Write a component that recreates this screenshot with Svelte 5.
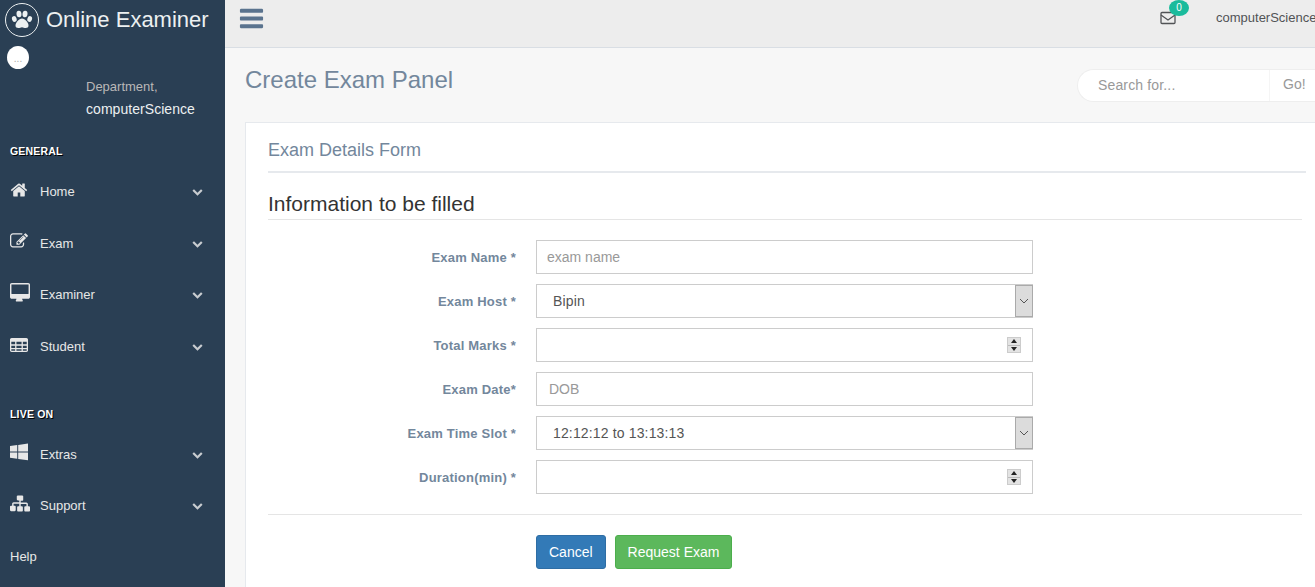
<script>
  const generalMenu = [
    { label: 'Home', icon: 'home' },
    { label: 'Exam', icon: 'edit' },
    { label: 'Examiner', icon: 'desktop' },
    { label: 'Student', icon: 'table' }
  ];
  const liveMenu = [
    { label: 'Extras', icon: 'windows' },
    { label: 'Support', icon: 'sitemap' }
  ];
</script>

{#snippet navIcon(name)}
  <svg class="nav-icon {name}" viewBox="0 0 1792 1792" fill="currentColor" aria-hidden="true">
    {#if name === 'home'}
      <path d="M1472 992v480q0 26-19 45t-45 19h-384v-384H768v384H384q-26 0-45-19t-19-45V992q0-1 .5-3t.5-3l575-474 575 474q1 2 1 6zm223-69l-62 74q-8 9-21 11h-3q-13 0-21-7L896 424l-692 577q-12 8-24 7-13-2-21-11l-62-74q-8-10-7-23.5t11-21.5l719-599q32-26 76-26t76 26l244 204V288q0-14 9-23t23-9h192q14 0 23 9t9 23v408l219 182q10 8 11 21.5t-7 23.5z" />
    {:else if name === 'edit'}
      <path d="M888 1184l116-116-152-152-116 116v56h96v96h56zm440-720q-16-16-33 1L945 815q-17 17-1 33t33-1l350-350q17-17 1-33zm80 594v190q0 119-84.500 203.500T1120 1536H288q-119 0-203.500-84.500T0 1248V416q0-119 84.500-203.500T288 128h832q63 0 117 25 15 7 18 23 3 17-9 29l-49 49q-14 14-32 8-23-6-45-6H288q-66 0-113 47t-47 113v832q0 66 47 113t113 47h832q66 0 113-47t47-113v-126q0-13 9-22l64-64q15-15 35-7t20 29zm-96-738l288 288-672 672H640v-288zm444 132l-92 92-288-288 92-92q28-28 68-28t68 28l152 152q28 28 28 68t-28 68z" />
    {:else if name === 'desktop'}
      <path d="M1664 944V160q0-13-9.500-22.500T1632 128H160q-13 0-22.500 9.500T128 160v784q0 13 9.500 22.500T160 976h1472q13 0 22.500-9.500t9.500-22.500zm128-784v1088q0 66-47 113t-113 47h-544q0 37 16 77.500t32 71 16 43.500q0 26-19 45t-45 19H576q-26 0-45-19t-19-45q0-14 16-44t32-70 16-78H160q-66 0-113-47T0 1248V160Q0 94 47 47T160 0h1472q66 0 113 47t47 113z" />
    {:else if name === 'table'}
      <path fill-rule="evenodd" d="M160 192h1472q66 0 113 47t47 113v1088q0 66-47 113t-113 47H160q-66 0-113-47T0 1440V352q0-66 47-113t113-47zM128 576v256h384V576zm512 0v256h512V576zm640 0v256h384V576zM128 960v224h384V960zm512 0v224h512V960zm640 0v224h384V960zM128 1312v128q0 32 32 32h352v-160zm512 0v160h512v-160zm640 0v160h352q32 0 32-32v-128z" />
    {:else if name === 'windows'}
      <path d="M0 300l720-98v640H0zM816 190l976-134v786H816zM0 938h720v640L0 1480zM816 938h976v786l-976-134z" />
    {:else if name === 'sitemap'}
      <path d="M704 128h384q40 0 68 28t28 68v288q0 40-28 68t-68 28H960v160h512q52 0 90 38t38 90v192h96q40 0 68 28t28 68v288q0 40-28 68t-68 28h-320q-40 0-68-28t-28-68v-288q0-40 28-68t68-28h96v-192H960v192h96q40 0 68 28t28 68v288q0 40-28 68t-68 28H736q-40 0-68-28t-28-68v-288q0-40 28-68t68-28h96V864H320v192h96q40 0 68 28t28 68v288q0 40-28 68t-68 28H96q-40 0-68-28t-28-68v-288q0-40 28-68t68-28h96V864q0-52 38-90t90-38h512V576H704q-40 0-68-28t-28-68V224q0-40 28-68t68-28z" />
    {/if}
  </svg>
{/snippet}

{#snippet menuItem(item)}
  <li class="menu-item">
    {@render navIcon(item.icon)}
    <span class="menu-label">{item.label}</span>
    <svg class="chevron" viewBox="0 0 1792 1792" fill="currentColor" aria-hidden="true">
      <path d="M1683 808l-742 741q-19 19-45 19t-45-19L109 808q-19-19-19-45.500t19-45.500l166-165q19-19 45-19t45 19l531 531 531-531q19-19 45-19t45 19l166 165q19 19 19 45.500t-19 45.500z" />
    </svg>
  </li>
{/snippet}

<div class="layout">
  <aside class="sidebar">
    <div class="brand">
      <span class="brand-logo">
        <svg viewBox="0 0 24 24" width="24" height="24" fill="currentColor" aria-hidden="true">
          <ellipse cx="4.300" cy="11" rx="2.300" ry="3" transform="rotate(-18 4.300 11)" />
          <ellipse cx="9" cy="6" rx="2.500" ry="3.300" transform="rotate(-6 9 6)" />
          <ellipse cx="15" cy="6" rx="2.500" ry="3.300" transform="rotate(6 15 6)" />
          <ellipse cx="19.700" cy="11" rx="2.300" ry="3" transform="rotate(18 19.700 11)" />
          <path d="M12 10.500c-3 0-6.500 4-6.500 7 0 1.800 1.300 2.500 2.800 2.500 1.500 0 2.500-.8 3.700-.8s2.200.8 3.700.8c1.500 0 2.800-.7 2.800-2.500 0-3-3.500-7-6.500-7z" />
        </svg>
      </span>
      <span class="brand-name">Online Examiner</span>
    </div>

    <div class="avatar">...</div>
    <div class="profile">
      <span class="welcome">Department,</span>
      <span class="dept">computerScience</span>
    </div>

    <h3 class="section first">GENERAL</h3>
    <ul class="menu">
      {#each generalMenu as item}
        {@render menuItem(item)}
      {/each}
    </ul>

    <h3 class="section live">LIVE ON</h3>
    <ul class="menu">
      {#each liveMenu as item}
        {@render menuItem(item)}
      {/each}
    </ul>
    <div class="help">Help</div>
  </aside>

  <main class="main">
    <header class="topbar">
      <svg class="toggle" viewBox="0 0 1792 1792" fill="currentColor" aria-hidden="true">
        <path d="M1664 1344v128q0 26-19 45t-45 19H192q-26 0-45-19t-19-45v-128q0-26 19-45t45-19h1408q26 0 45 19t19 45zm0-512v128q0 26-19 45t-45 19H192q-26 0-45-19t-19-45V832q0-26 19-45t45-19h1408q26 0 45 19t19 45zm0-512v128q0 26-19 45t-45 19H192q-26 0-45-19t-19-45V320q0-26 19-45t45-19h1408q26 0 45 19t19 45z" />
      </svg>
      <div class="mail">
        <svg viewBox="0 0 16 14" width="16" height="14" fill="none" stroke="currentColor" stroke-width="1.300" aria-hidden="true">
          <rect x="1" y="1.500" width="14" height="11" rx="1" />
          <path d="M1 4l7 5 7-5" />
        </svg>
        <span class="badge">0</span>
      </div>
      <span class="user">computerScience</span>
    </header>

    <section class="content">
      <div class="page-title">
        <h1>Create Exam Panel</h1>
        <div class="search">
          <input type="text" placeholder="Search for..." />
          <span class="go">Go!</span>
        </div>
      </div>

      <div class="panel">
        <h2 class="panel-title">Exam Details Form</h2>
        <form class="form">
          <h3 class="legend">Information to be filled</h3>

          <div class="row">
            <label for="exam-name">Exam Name *</label>
            <input id="exam-name" class="field tight" type="text" placeholder="exam name" />
          </div>
          <div class="row">
            <label for="exam-host">Exam Host *</label>
            <div class="select">
              <select id="exam-host" class="field"><option>Bipin</option></select>
              <span class="select-btn"><svg viewBox="0 0 10 6" width="10" height="6" fill="none" stroke="#555" stroke-width="1"><path d="M1 1l4 4 4-4" /></svg></span>
            </div>
          </div>
          <div class="row">
            <label for="total-marks">Total Marks *</label>
            <div class="select">
              <input id="total-marks" class="field" type="text" />
              <span class="spinner"><i class="up"></i><i class="down"></i></span>
            </div>
          </div>
          <div class="row">
            <label for="exam-date">Exam Date*</label>
            <input id="exam-date" class="field" type="text" placeholder="DOB" />
          </div>
          <div class="row">
            <label for="time-slot">Exam Time Slot *</label>
            <div class="select">
              <select id="time-slot" class="field"><option>12:12:12 to 13:13:13</option></select>
              <span class="select-btn"><svg viewBox="0 0 10 6" width="10" height="6" fill="none" stroke="#555" stroke-width="1"><path d="M1 1l4 4 4-4" /></svg></span>
            </div>
          </div>
          <div class="row">
            <label for="duration">Duration(min) *</label>
            <div class="select">
              <input id="duration" class="field" type="text" />
              <span class="spinner"><i class="up"></i><i class="down"></i></span>
            </div>
          </div>

          <div class="actions">
            <button type="button" class="btn blue">Cancel</button>
            <button type="button" class="btn green">Request Exam</button>
          </div>
        </form>
      </div>
    </section>
  </main>
</div>

<style>
  :global(body) {
    margin: 0;
    font-family: "Liberation Sans", Arial, sans-serif;
    font-size: 13px;
    overflow: hidden;
  }
  * {
    box-sizing: border-box;
  }
  .layout {
    display: flex;
    width: 1315px;
    height: 587px;
    overflow: hidden;
  }

  .sidebar {
    flex: 0 0 225px;
    background: #2a3f54;
    color: #e7e7e7;
    display: flex;
    flex-direction: column;
  }
  .brand {
    display: flex;
    align-items: center;
    height: 38px;
    margin-top: 1px;
    padding-left: 5px;
    gap: 7px;
  }
  .brand-logo {
    width: 34px;
    height: 34px;
    border: 1px solid #ecf0f1;
    border-radius: 50%;
    color: #ecf0f1;
    display: flex;
    align-items: center;
    justify-content: center;
  }
  .brand-name {
    font-size: 22px;
    color: #ecf0f1;
  }
  .avatar {
    width: 22px;
    height: 23px;
    margin: 7px 0 0 7px;
    background: #fff;
    border-radius: 50%;
    color: #aaa;
    font-size: 10px;
    line-height: 26px;
    text-align: center;
  }
  .profile {
    display: flex;
    flex-direction: column;
    padding: 9px 0 0 86px;
  }
  .welcome {
    color: #bab8b8;
    font-size: 13px;
    line-height: 18px;
  }
  .dept {
    color: #ecf0f1;
    font-size: 14px;
    letter-spacing: 0.05px;
    line-height: 16px;
    margin-top: 5px;
  }
  .section {
    margin: 0;
    padding-left: 10px;
    font-size: 10.500px;
    line-height: 12px;
    font-weight: bold;
    letter-spacing: 0.2px;
    color: #fff;
    text-shadow: 1px 1px #000;
  }
  .section.first {
    margin-top: 28px;
    margin-bottom: 9px;
  }
  .section.live {
    margin-top: 36px;
    margin-bottom: 8px;
  }
  .menu {
    list-style: none;
    margin: 0;
    padding: 0;
  }
  .menu-item {
    display: flex;
    align-items: center;
    height: 51.600px;
    padding-left: 10px;
    color: #e7e7e7;
  }
  .nav-icon {
    flex: 0 0 18px;
    width: 18px;
    height: 18px;
    margin-top: -4px;
  }
  .nav-icon.desktop,
  .nav-icon.sitemap {
    flex: 0 0 20px;
    width: 20px;
    height: 20px;
    margin-right: -2px;
  }
  .menu-label {
    margin-left: 12px;
    flex: 1;
    font-size: 13px;
  }
  .chevron {
    width: 11px;
    height: 11px;
    margin-right: 22px;
    color: #c8ccd0;
  }
  .help {
    padding-left: 10px;
    margin-top: 17px;
    font-size: 13px;
    color: #e7e7e7;
  }

  .main {
    flex: 1;
    min-width: 0;
    display: flex;
    flex-direction: column;
    background: #f7f7f7;
  }
  .topbar {
    flex: 0 0 48px;
    display: flex;
    align-items: flex-start;
    background: #ededed;
    border-bottom: 1px solid #d9dee4;
  }
  .toggle {
    width: 27px;
    height: 27px;
    margin: 5px 0 0 13px;
    color: #5a738e;
  }
  .mail {
    position: relative;
    margin: 11px 0 0 auto;
    color: #515356;
    line-height: 0;
  }
  .badge {
    position: absolute;
    top: -11px;
    left: 9px;
    width: 20px;
    height: 16px;
    border-radius: 50%;
    background: #1abb9c;
    color: #fff;
    font-size: 10px;
    line-height: 15px;
    text-align: center;
  }
  .user {
    flex: 0 0 auto;
    width: 99px;
    margin: 11px 0 0 40px;
    color: #515356;
    font-size: 13px;
    line-height: 14px;
    white-space: nowrap;
    overflow: hidden;
  }

  .content {
    flex: 1;
    padding: 0 0 0 20px;
  }
  .page-title {
    display: flex;
    justify-content: space-between;
    height: 74px;
  }
  .page-title h1 {
    margin: 18px 0 0;
    font-size: 24px;
    line-height: 27px;
    font-weight: 400;
    color: #73879c;
  }
  .search {
    display: flex;
    width: 238px;
    height: 33px;
    margin: 21px 0 0;
    background: #fff;
    border: 1px solid #eee;
    border-right: 0;
    border-radius: 17px 0 0 17px;
  }
  .search input {
    flex: 1;
    min-width: 0;
    height: 29px;
    border: 0;
    outline: 0;
    background: transparent;
    padding: 0 0 0 20px;
    font: 14px "Liberation Sans", Arial, sans-serif;
    letter-spacing: 0.15px;
    color: #555;
  }
  .search input::placeholder {
    color: #999;
  }
  .go {
    flex: 0 0 46px;
    border-left: 1px solid #f5f5f5;
    padding-left: 13px;
    color: #999;
    font-size: 14px;
    line-height: 29px;
  }

  .panel {
    width: 1080px;
    height: 500px;
    background: #fff;
    border: 1px solid #e6e9ed;
    padding: 0 18px 0 22px;
  }
  .panel-title {
    margin: 0;
    height: 50px;
    border-bottom: 2px solid #e6e9ed;
    font-size: 18px;
    font-weight: 400;
    line-height: 55px;
    color: #73879c;
  }
  .form {
    display: flex;
    flex-direction: column;
  }
  .legend {
    margin: 19px 4px 20px 0;
    padding-bottom: 4px;
    font-size: 21px;
    line-height: 23px;
    font-weight: 400;
    color: #333;
    border-bottom: 1px solid #e5e5e5;
  }
  .row {
    display: flex;
    align-items: center;
    height: 34px;
    margin-bottom: 10px;
  }
  .row label {
    flex: 0 0 248px;
    text-align: right;
    font-weight: bold;
    font-size: 13px;
    letter-spacing: 0.2px;
    color: #73879c;
  }
  .field {
    display: block;
    width: 497px;
    height: 34px;
    border: 1px solid #ccc;
    background: #fff;
    padding: 0 12px;
    font: 14px "Liberation Sans", Arial, sans-serif;
    color: #555;
    outline: 0;
    appearance: none;
    border-radius: 0;
  }
  .field.tight {
    padding-left: 10px;
  }
  select.field {
    padding-left: 16px;
    letter-spacing: 0.15px;
  }
  .row > .field,
  .row > .select {
    margin-left: 20px;
  }
  .field::placeholder {
    color: #999;
  }
  .select {
    position: relative;
    width: 497px;
    height: 34px;
  }
  .select-btn {
    position: absolute;
    top: 1px;
    right: 0;
    width: 18px;
    height: 32px;
    background: #dcdcdc;
    border: 1px solid #aaa;
    display: flex;
    align-items: center;
    justify-content: center;
  }
  .spinner {
    position: absolute;
    top: 9px;
    right: 12px;
    width: 14px;
    height: 16px;
    background: #e3e3e3;
    border: 1px solid #ccc;
    display: flex;
    flex-direction: column;
    align-items: center;
  }
  .spinner i {
    flex: 1;
    display: flex;
    align-items: center;
    justify-content: center;
    width: 100%;
  }
  .spinner .up {
    border-bottom: 1px solid #bbb;
  }
  .spinner .up::after,
  .spinner .down::after {
    content: "";
    border-left: 3px solid transparent;
    border-right: 3px solid transparent;
  }
  .spinner .up::after {
    border-bottom: 4px solid #222;
  }
  .spinner .down::after {
    border-top: 4px solid #222;
  }
  .actions {
    margin-top: 10px;
    margin-right: 4px;
    padding: 20px 0 0 268px;
    border-top: 1px solid #e5e5e5;
    display: flex;
    gap: 9px;
  }
  .btn {
    height: 34px;
    padding: 0 12px;
    border: 1px solid;
    border-radius: 3px;
    font: 14px "Liberation Sans", Arial, sans-serif;
    color: #fff;
  }
  .btn.blue {
    background: #337ab7;
    border-color: #2e6da4;
  }
  .btn.green {
    background: #5cb85c;
    border-color: #4cae4c;
  }
</style>
